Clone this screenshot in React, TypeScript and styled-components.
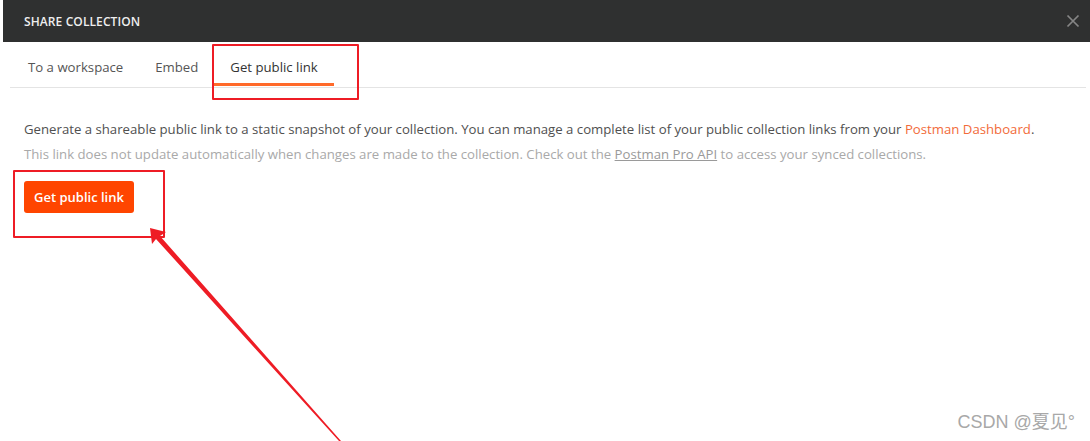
import React from 'react';
import styled, { createGlobalStyle } from 'styled-components';

const GlobalStyle = createGlobalStyle`
  html, body {
    margin: 0;
    padding: 0;
    background: #ffffff;
  }
  body {
    font-family: 'Open Sans', 'Noto Sans', sans-serif;
  }
`;

const Page = styled.div`
  position: relative;
  width: 1090px;
  height: 441px;
  overflow: hidden;
  background: #ffffff;
`;

const Modal = styled.div`
  margin-left: 3px;
  display: flex;
  flex-direction: column;
`;

const Header = styled.div`
  height: 42px;
  background: #2f3030;
  display: flex;
  align-items: center;
  justify-content: space-between;
  padding: 0 10px 0 21px;
`;

const Title = styled.span`
  color: #eeeeee;
  font-size: 12px;
  font-weight: 600;
  letter-spacing: 0.1px;
`;

const Close = styled.button`
  border: 0;
  background: transparent;
  padding: 0;
  width: 14px;
  height: 14px;
  display: flex;
  cursor: pointer;
`;

const TabBar = styled.div`
  display: flex;
  height: 45px;
  margin: 0 4px 0 7px;
  padding-left: 2px;
  border-bottom: 1px solid #e4e4e4;
`;

const Tab = styled.div<{ $active?: boolean }>`
  display: flex;
  align-items: center;
  padding: 6px 16px 0;
  font-size: 13.2px;
  color: ${p => (p.$active ? '#333333' : '#555555')};
  box-shadow: ${p => (p.$active ? 'inset 0 -3px 0 #ff6a2a' : 'none')};
  margin-bottom: 1px;
`;

const Body = styled.div`
  padding: 29px 21px 0;
  display: flex;
  flex-direction: column;
  align-items: flex-start;
`;

const Lead = styled.p`
  margin: 0;
  font-size: 13.2px;
  line-height: 25px;
  color: #505050;
`;

const Note = styled(Lead)`
  color: #a9a9a9;
`;

const OrangeLink = styled.a`
  color: #f26b3a;
  text-decoration: none;
`;

const GreyLink = styled.a`
  color: #9a9a9a;
  text-decoration: underline;
`;

const PrimaryButton = styled.button`
  margin-top: 14px;
  height: 32px;
  padding: 0 10px;
  border: 0;
  border-radius: 3px;
  background: #ff4500;
  color: #ffffff;
  font-family: inherit;
  font-size: 13px;
  font-weight: 600;
  cursor: pointer;
`;

const Highlight = styled.div<{ $x: number; $y: number; $w: number; $h: number }>`
  position: absolute;
  left: ${p => p.$x}px;
  top: ${p => p.$y}px;
  width: ${p => p.$w}px;
  height: ${p => p.$h}px;
  box-sizing: border-box;
  border: 2px solid #ee1c25;
  border-radius: 1px;
  pointer-events: none;
`;

const ArrowLayer = styled.svg`
  position: absolute;
  left: 0;
  top: 0;
  pointer-events: none;
`;

const Watermark = styled.div`
  position: absolute;
  right: 15px;
  bottom: 8px;
  font-family: 'Liberation Sans', 'Noto Sans CJK SC', sans-serif;
  font-size: 18px;
  color: #a8a8a8;
  pointer-events: none;
`;

const tabs = ['To a workspace', 'Embed', 'Get public link'];

export default function App() {
  return (
    <Page>
      <GlobalStyle />
      <Modal>
        <Header>
          <Title>SHARE COLLECTION</Title>
          <Close aria-label="close">
            <svg width="14" height="14" viewBox="0 0 14 14">
              <path d="M1.5 1.5 L12.5 12.5 M12.5 1.5 L1.5 12.5" stroke="#868686" strokeWidth="1.7" fill="none" />
            </svg>
          </Close>
        </Header>
        <TabBar>
          {tabs.map(t => (
            <Tab key={t} $active={t === 'Get public link'}>{t}</Tab>
          ))}
        </TabBar>
        <Body>
          <Lead>
            Generate a shareable public link to a static snapshot of your collection. You can manage a complete list of your public collection links from your <OrangeLink>Postman Dashboard</OrangeLink>.
          </Lead>
          <Note>
            This link does not update automatically when changes are made to the collection. Check out the <GreyLink>Postman Pro API</GreyLink> to access your synced collections.
          </Note>
          <PrimaryButton>Get public link</PrimaryButton>
        </Body>
      </Modal>

      <Highlight $x={212} $y={44} $w={147} $h={56} />
      <Highlight $x={13} $y={170} $w={152} $h={68} />
      <ArrowLayer width="1090" height="441" viewBox="0 0 1090 441">
        <polygon points="150,228 166,232 160,236 341,441 339,441 156,239 152,244" fill="#ee1c25" />
      </ArrowLayer>
      <Watermark>CSDN @夏见°</Watermark>
    </Page>
  );
}
